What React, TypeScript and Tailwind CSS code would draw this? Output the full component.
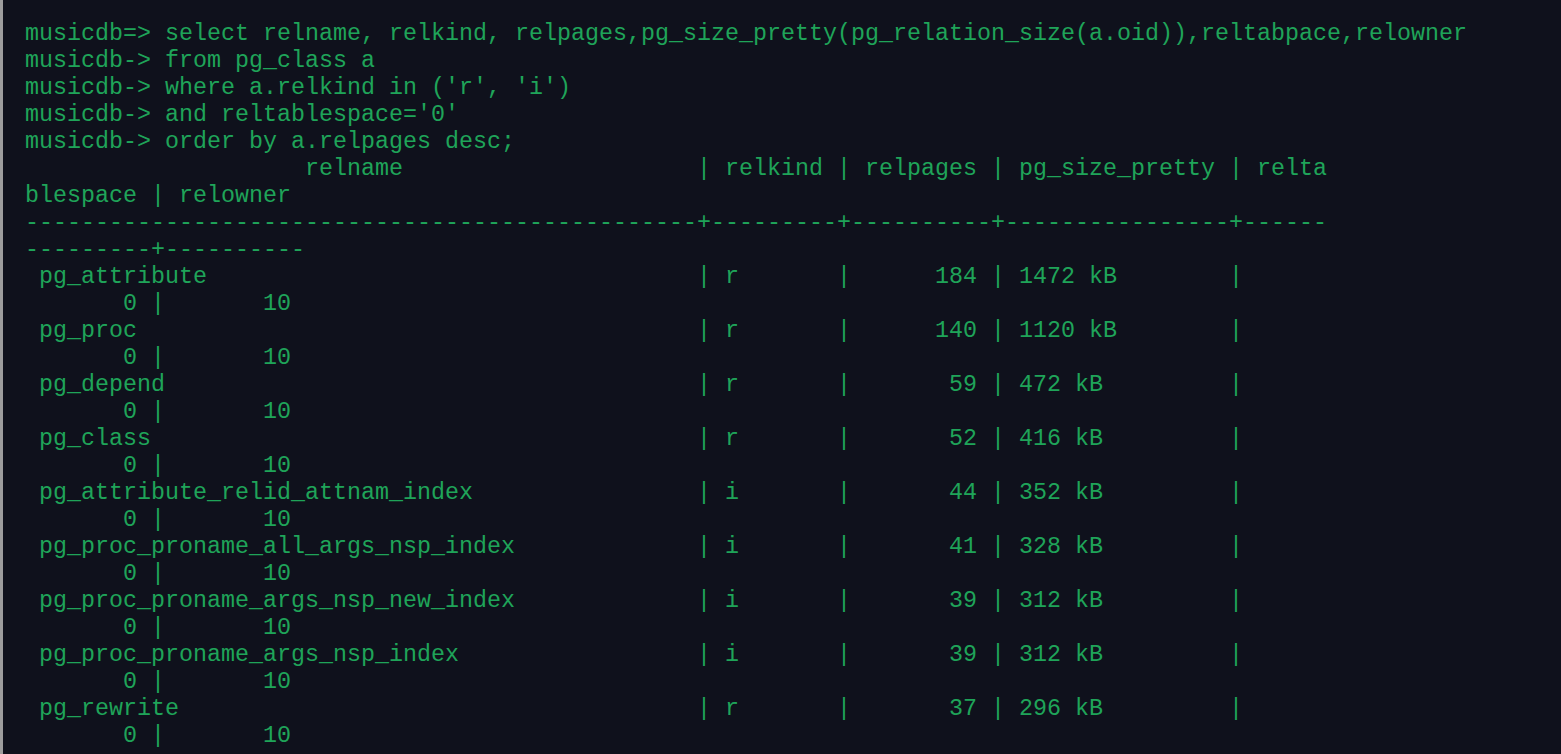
const query = [
  "musicdb=> select relname, relkind, relpages,pg_size_pretty(pg_relation_size(a.oid)),reltabpace,relowner",
  "musicdb-> from pg_class a",
  "musicdb-> where a.relkind in ('r', 'i')",
  "musicdb-> and reltablespace='0'",
  "musicdb-> order by a.relpages desc;",
];

const rows: [string, string, number, string][] = [
  ["pg_attribute", "r", 184, "1472 kB"],
  ["pg_proc", "r", 140, "1120 kB"],
  ["pg_depend", "r", 59, "472 kB"],
  ["pg_class", "r", 52, "416 kB"],
  ["pg_attribute_relid_attnam_index", "i", 44, "352 kB"],
  ["pg_proc_proname_all_args_nsp_index", "i", 41, "328 kB"],
  ["pg_proc_proname_args_nsp_new_index", "i", 39, "312 kB"],
  ["pg_proc_proname_args_nsp_index", "i", 39, "312 kB"],
  ["pg_rewrite", "r", 37, "296 kB"],
];

// terminal wraps at 93 columns
const WRAP = 93;

function wrap(line: string) {
  const out: string[] = [];
  for (let i = 0; i < line.length; i += WRAP) out.push(line.slice(i, i + WRAP));
  return out;
}

const header =
  " " + " ".repeat(19) + "relname" + " ".repeat(20) + " | relkind | relpages | pg_size_pretty | reltablespace | relowner";
const divider =
  "-".repeat(48) + "+" + "-".repeat(9) + "+" + "-".repeat(10) + "+" + "-".repeat(16) + "+" + "-".repeat(15) + "+" + "-".repeat(10);

const lines = [
  ...query,
  ...wrap(header),
  ...wrap(divider),
  ...rows.flatMap(([name, kind, pages, size]) =>
    wrap(
      " " + name.padEnd(46) + " | " + kind.padEnd(7) + " | " + String(pages).padStart(8) + " | " +
        size.padEnd(14) + " | " + "0".padStart(13) + " | " + "10".padStart(8)
    )
  ),
];

export default function App() {
  return (
    <div className="h-[754px] w-full overflow-hidden border-l-[3px] border-[#9d9d9d] bg-[#0f111c] pl-[22px] pt-[21px]">
      <div className="font-['Liberation_Mono','Courier_New',monospace] text-[23.33px] text-[#1fa459]">
        {lines.map((line, i) => (
          <div key={i} className="h-[27px] whitespace-pre leading-[27px]">
            {line}
          </div>
        ))}
      </div>
    </div>
  );
}
